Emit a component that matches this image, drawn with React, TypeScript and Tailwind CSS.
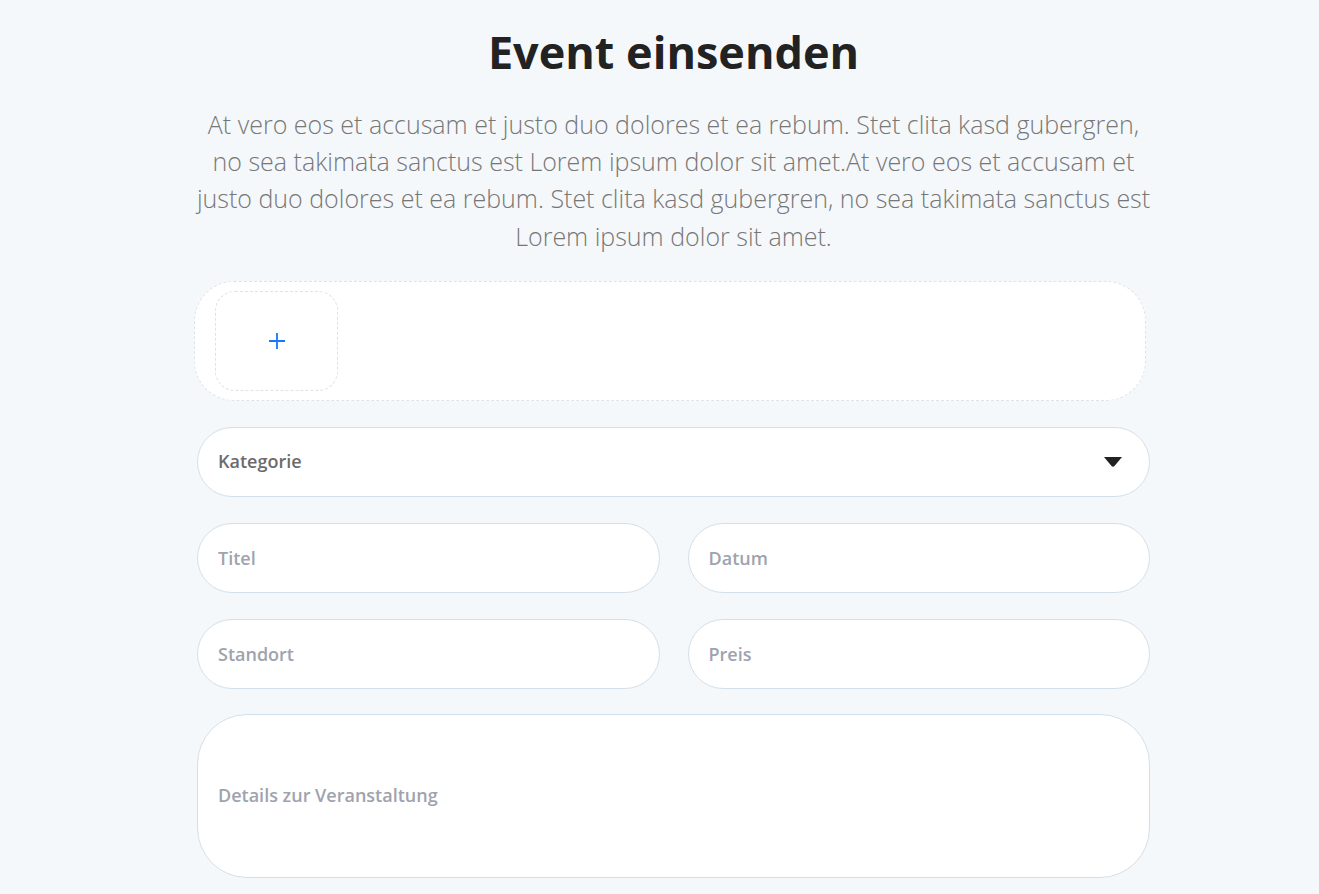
const fieldClass =
  'h-[70px] w-full rounded-full border border-[#d3e0ea] bg-white px-5 text-[18px] font-semibold text-[#9ea3ae] outline-none placeholder:text-[#9ea3ae]';

export default function App() {
  return (
    <div
      className="min-h-[894px] bg-[#f5f8fb] pl-[28px]"
      style={{ fontFamily: '"Open Sans", "Noto Sans", sans-serif' }}
    >
      <div className="mx-auto w-[953px] pt-[20px]">
        <h1 className="text-center text-[45px] font-bold leading-[64px] text-[#222]">
          Event einsenden
        </h1>
        <p className="-mx-[5px] mt-[22px] text-center text-[25px] font-light leading-[37.2px] text-[#777]">
          At vero eos et accusam et justo duo dolores et ea rebum. Stet clita kasd gubergren, no sea
          takimata sanctus est Lorem ipsum dolor sit amet.At vero eos et accusam et justo duo dolores et
          ea rebum. Stet clita kasd gubergren, no sea takimata sanctus est Lorem ipsum dolor sit amet.
        </p>

        <div className="-ml-[3px] mt-[26px] w-[952px] rounded-[40px] border border-dashed border-[#dfe3e8] bg-white px-[20px] py-[9px]">
          <div className="flex h-[100px] w-[123px] items-center justify-center rounded-[20px] border border-dashed border-[#dfe3e8] bg-white">
            <svg width="18" height="18" viewBox="0 0 18 18">
              <path d="M9 1 V17 M1 9 H17" stroke="#1677ff" strokeWidth="1.8" />
            </svg>
          </div>
        </div>

        <div className="mt-[26px] flex h-[70px] items-center justify-between rounded-full border border-[#d3e0ea] bg-white pl-5 pr-[27px]">
          <span className="text-[18px] font-semibold text-[#6b6b6b]">Kategorie</span>
          <svg width="18" height="10" viewBox="0 0 18 10">
            <path d="M0 0 H18 L10.5 9 Q9 10.5 7.5 9 Z" fill="#222" />
          </svg>
        </div>

        <div className="mt-[26px] grid grid-cols-2 gap-x-[28px] gap-y-[26px]">
          <input className={fieldClass} placeholder="Titel" />
          <input className={fieldClass} placeholder="Datum" />
          <input className={fieldClass} placeholder="Standort" />
          <input className={fieldClass} placeholder="Preis" />
        </div>

        <div className="mt-[25px] flex h-[164px] items-center rounded-[50px] border border-[#d3e0ea] bg-white px-5">
          <span className="text-[18px] font-semibold text-[#9ea3ae]">Details zur Veranstaltung</span>
        </div>
      </div>
    </div>
  );
}
